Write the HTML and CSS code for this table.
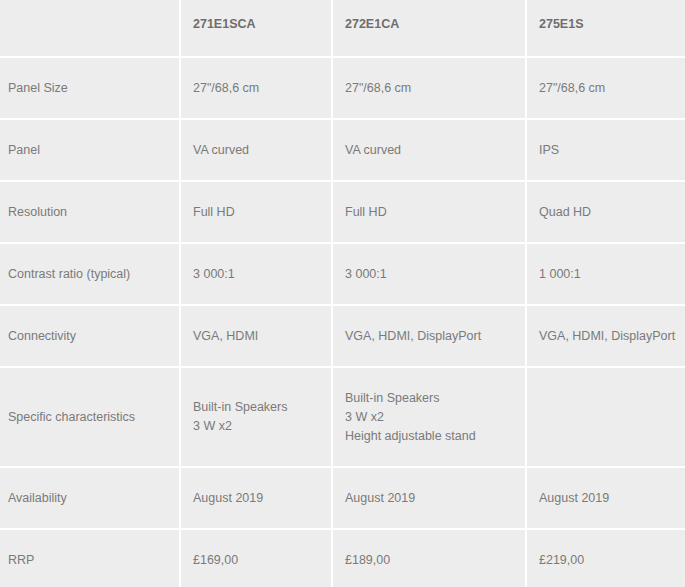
FILE: index.html
```html
<!DOCTYPE html>
<html>
<head>
<meta charset="utf-8">
<link rel="stylesheet" href="styles.css">
</head>
<body>
<table class="spec">
  <colgroup>
    <col class="c1"><col class="c2"><col class="c3"><col class="c4">
  </colgroup>
  <tr class="head">
    <td></td><td>271E1SCA</td><td>272E1CA</td><td>275E1S</td>
  </tr>
  <tr><td>Panel Size</td><td>27"/68,6 cm</td><td>27"/68,6 cm</td><td>27"/68,6 cm</td></tr>
  <tr><td>Panel</td><td>VA curved</td><td>VA curved</td><td>IPS</td></tr>
  <tr><td>Resolution</td><td>Full HD</td><td>Full HD</td><td>Quad HD</td></tr>
  <tr><td>Contrast ratio (typical)</td><td>3 000:1</td><td>3 000:1</td><td>1 000:1</td></tr>
  <tr><td>Connectivity</td><td>VGA, HDMI</td><td>VGA, HDMI, DisplayPort</td><td>VGA, HDMI, DisplayPort</td></tr>
  <tr class="tall"><td>Specific characteristics</td><td>Built-in Speakers<br>3 W x2</td><td>Built-in Speakers<br>3 W x2<br>Height adjustable stand</td><td></td></tr>
  <tr><td>Availability</td><td>August 2019</td><td>August 2019</td><td>August 2019</td></tr>
  <tr><td>RRP</td><td>£169,00</td><td>£189,00</td><td>£219,00</td></tr>
</table>
</body>
</html>
```
FILE: styles.css
```css
html, body {
  margin: 0;
  padding: 0;
  background: #ededed;
}
.spec {
  border-collapse: collapse;
  table-layout: fixed;
  width: 686px;
  font-family: "Liberation Sans", Arial, sans-serif;
  font-size: 12.5px;
  line-height: 19px;
  color: #7a7a7a;
  background: #ededed;
}
.c1 { width: 180px; }
.c2 { width: 152px; }
.c3 { width: 194px; }
.c4 { width: 160px; }
.spec td {
  height: 60px;
  padding: 0 0 0 12px;
  vertical-align: middle;
  border-top: 2px solid #fff;
  border-left: 2px solid #fff;
  border-right: 2px solid #fff;
  white-space: nowrap;
}
.spec td:first-child {
  border-left: none;
  padding-left: 8px;
}
.spec .head td {
  border-top: none;
  height: 49px;
  padding-bottom: 7px;
  font-weight: bold;
  color: #6e6e6e;
}
.spec .tall td {
  height: 98px;
}
```
